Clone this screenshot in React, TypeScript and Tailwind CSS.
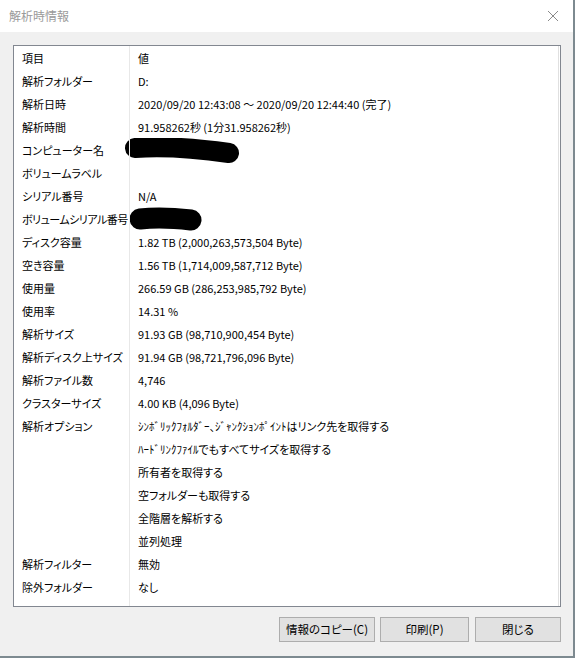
import React from 'react';

const rows: [string, React.ReactNode][] = [
  ['解析フォルダー', 'D:'],
  ['解析日時', '2020/09/20 12:43:08 〜 2020/09/20 12:44:40 (完了)'],
  ['解析時間', '91.958262秒 (1分31.958262秒)'],
  ['コンピューター名', 'redact-long'],
  ['ボリュームラベル', ''],
  ['シリアル番号', 'N/A'],
  ['ボリュームシリアル番号', 'redact-short'],
  ['ディスク容量', '1.82 TB (2,000,263,573,504 Byte)'],
  ['空き容量', '1.56 TB (1,714,009,587,712 Byte)'],
  ['使用量', '266.59 GB (286,253,985,792 Byte)'],
  ['使用率', '14.31 %'],
  ['解析サイズ', '91.93 GB (98,710,900,454 Byte)'],
  ['解析ディスク上サイズ', '91.94 GB (98,721,796,096 Byte)'],
  ['解析ファイル数', '4,746'],
  ['クラスターサイズ', '4.00 KB (4,096 Byte)'],
  ['解析オプション', 'ｼﾝﾎﾞﾘｯｸﾌｫﾙﾀﾞｰ、ｼﾞｬﾝｸｼｮﾝﾎﾟｲﾝﾄはリンク先を取得する'],
  ['', 'ﾊｰﾄﾞﾘﾝｸﾌｧｲﾙでもすべてサイズを取得する'],
  ['', '所有者を取得する'],
  ['', '空フォルダーも取得する'],
  ['', '全階層を解析する'],
  ['', '並列処理'],
  ['解析フィルター', '無効'],
  ['除外フォルダー', 'なし'],
];

function Redacted({ long }: { long: boolean }) {
  // hand-drawn marker scribble over private values
  return long ? (
    <svg width="122" height="28" className="-ml-[15px] mt-[3px] shrink-0">
      <path d="M12 10 C 40 8, 78 11, 106 15" stroke="#000" strokeWidth="20" strokeLinecap="round" fill="none" />
    </svg>
  ) : (
    <svg width="76" height="28" className="-ml-[9px] shrink-0">
      <path d="M11 13 C 28 11, 45 12, 62 14" stroke="#000" strokeWidth="21" strokeLinecap="round" fill="none" />
    </svg>
  );
}

function Row({ label, value }: { label: string; value: React.ReactNode }) {
  const tight = label.length > 10;
  return (
    <div className="flex h-[23px] items-center">
      <div className={tight ? 'w-[116px] shrink-0 whitespace-nowrap pl-[8px] tracking-[-0.5px]' : 'w-[116px] shrink-0 whitespace-nowrap pl-[8px]'}>
        {label}
      </div>
      <div className="flex h-full items-center whitespace-nowrap pl-[8px]">
        {value === 'redact-long' ? <Redacted long /> : value === 'redact-short' ? <Redacted long={false} /> : value}
      </div>
    </div>
  );
}

function Button({ children, w }: { children: React.ReactNode; w: string }) {
  return (
    <button className={`${w} h-[25px] border border-[#adadad] bg-[#e1e1e1] text-[11.5px] text-black`}>
      {children}
    </button>
  );
}

export default function App() {
  return (
    <div
      className="h-[658px] w-[575px] bg-[#7d8a90] text-[11px] text-black [font-feature-settings:'palt']"
      style={{ fontFamily: '"Noto Sans CJK JP", "Noto Sans", sans-serif' }}
    >
      <div className="flex h-[656px] w-[573px] flex-col bg-[#f0f0f0]">
        {/* title bar */}
        <div className="flex h-[32px] shrink-0 items-center justify-between bg-white pl-[9px] pr-[14px]">
          <span className="text-[12px] text-[#9a9a9a] [font-feature-settings:normal]">解析時情報</span>
          <svg width="12" height="12" viewBox="0 0 12 12">
            <path d="M1 1 L11 11 M11 1 L1 11" stroke="#8a8a8a" strokeWidth="1" fill="none" />
          </svg>
        </div>

        <div className="flex flex-1 flex-col pl-[13px] pr-[12px] pt-[13px]">
          {/* list view */}
          <div className="relative h-[562px] w-[548px] overflow-hidden border border-[#828790] bg-white pt-[1px]">
            <div className="pointer-events-none absolute bottom-0 left-[115px] top-0 w-px bg-[#e8e8e8]" />
            <div className="pointer-events-none absolute bottom-0 right-[1px] top-0 w-px bg-[#e0e0e0]" />
            <Row label="項目" value="値" />
            {rows.map(([l, v], i) => (
              <Row key={i} label={l} value={v} />
            ))}
          </div>

          {/* buttons */}
          <div className="mt-[10px] flex justify-end">
            <Button w="w-[96px]">情報のコピー(C)</Button>
            <div className="w-[5px]" />
            <Button w="w-[89px]">印刷(P)</Button>
            <div className="w-[6px]" />
            <Button w="w-[86px]">閉じる</Button>
          </div>
        </div>
      </div>
    </div>
  );
}
